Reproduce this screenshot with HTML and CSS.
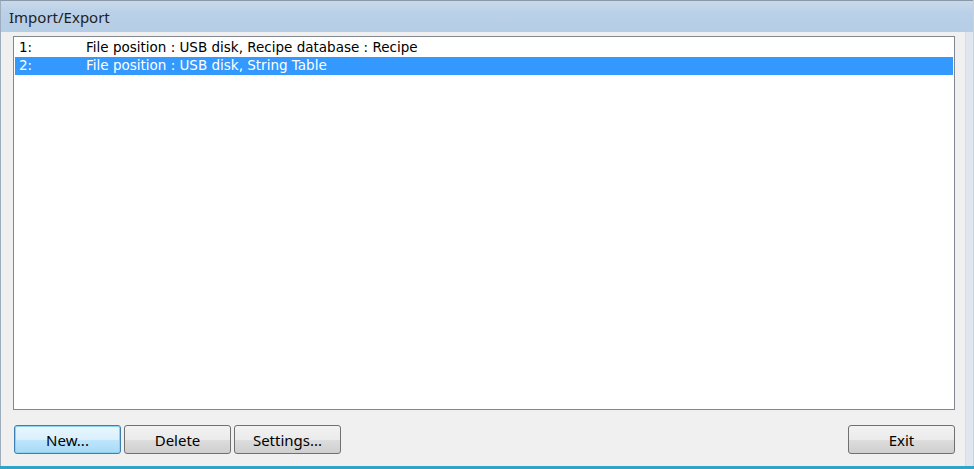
FILE: index.html
```html
<!doctype html>
<html>
<head>
<meta charset="utf-8">
<title>Import/Export</title>
<link rel="stylesheet" href="styles.css">
</head>
<body>
<div class="win">
	<div class="title">Import/Export</div>
	<div class="body">
		<div class="list">
			<div class="row"><span class="no">1:</span><span>File position : USB disk, Recipe database : Recipe</span></div>
			<div class="row sel"><span class="no">2:</span><span>File position : USB disk, String Table</span></div>
		</div>
		<div class="btns">
			<button class="btn def">New...</button>
			<button class="btn">Delete</button>
			<button class="btn">Settings...</button>
			<span class="fill"></span>
			<button class="btn">Exit</button>
		</div>
	</div>
</div>
</body>
</html>
```

FILE: styles.css
```css
*{margin:0; padding:0; box-sizing:border-box;}
body{width:974px; height:469px; overflow:hidden; background:#2fa3c8; font-family:"Noto Sans", "Liberation Sans", sans-serif; font-size:14px; color:#000;}
.win{width:974px; height:466px; display:flex; flex-direction:column; background:#dfe6ee; border-right:1px solid #c8d2dc;}
.title{height:32px; line-height:33px; padding-left:8px; font-size:15px; color:#1e1e1e;
	background:linear-gradient(#c9d9ea, #b9d0e8 40%, #b6cde6); border-top:1px solid #8a98a8; border-left:1px solid #9eadbe;}
.body{flex:1; display:flex; flex-direction:column; background:#f0f0f0; padding:4px 10px 0 12px; border-left:1px solid #9eadbe; margin-right:7px; border-right:1px solid #d8dde3;}
.list{height:374px; background:#fff; border:1px solid #828790; padding:2px 1px;}
.row{height:18px; line-height:18px; display:flex; padding-left:4px; font:13.5px "DejaVu Sans", sans-serif;}
.row .no{width:67px;}
.row.sel{background:#3399ff; color:#fff;}
.btns{display:flex; gap:3px; margin-top:15px; padding-left:1px;}
.fill{flex:1;}
.btn{width:107px; height:29px; font:15px "Noto Sans", "Liberation Sans", sans-serif; color:#000; border:1px solid #707070; border-radius:3px;
	background:linear-gradient(#f2f2f2, #ebebeb 50%, #dddddd 51%, #cfcfcf);}
.btn.def{border-color:#3c7fb1; box-shadow:inset 0 0 0 1px #8fd1f2; background:linear-gradient(#eaf6fd, #d9f0fc 50%, #bee6fd 51%, #a7d9f5);}
```
